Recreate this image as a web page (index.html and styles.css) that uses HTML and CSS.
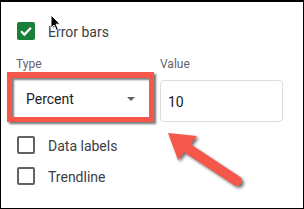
FILE: index.html
```html
<!DOCTYPE html>
<html>
<head>
<meta charset="utf-8">
<link rel="stylesheet" href="styles.css">
</head>
<body>
<div class="frame">
  <div class="row check-row first">
    <span class="box checked">
      <svg width="18" height="18" viewBox="0 0 18 18"><polyline points="4,9.2 7.4,12.6 14,5.8" fill="none" stroke="#fff" stroke-width="2.2"/></svg>
    </span>
    <span class="label">Error bars</span>
  </div>
  <div class="fields">
    <div class="col type-col">
      <div class="field-label type-label">Type</div>
      <div class="highlight">
        <div class="select">
          <span class="select-text">Percent</span>
          <span class="caret"></span>
        </div>
      </div>
    </div>
    <div class="col value-col">
      <div class="field-label">Value</div>
      <div class="input">10</div>
    </div>
  </div>
  <div class="row check-row second">
    <span class="box"></span>
    <span class="label">Data labels</span>
  </div>
  <div class="row check-row third">
    <span class="box"></span>
    <span class="label">Trendline</span>
  </div>

  <svg class="arrow" width="304" height="209" viewBox="0 0 304 209">
    <g class="arrow-g">
      <line x1="184" y1="146" x2="237" y2="181" stroke="#f5574a" stroke-width="10" stroke-linecap="round"/>
      <polygon points="168,133 197,136 178,160" fill="#f5574a"/>
    </g>
  </svg>

  <svg class="cursor" width="12" height="18" viewBox="0 0 12 18">
    <path d="M1,1 L1,14 L4,11 L6.5,16.5 L8.5,15.5 L6,10.2 L10.2,10.2 Z" fill="#000" stroke="#fff" stroke-width="1"/>
  </svg>
</div>
</body>
</html>
```

FILE: styles.css
```css
html, body {
  margin: 0;
  padding: 0;
  background: #fff;
}
.frame {
  position: relative;
  box-sizing: border-box;
  width: 304px;
  height: 209px;
  border: 1px solid #000;
  border-top-width: 2px;
  overflow: hidden;
  font-family: Roboto, "Noto Sans", sans-serif;
  color: #3c4043;
}
.row {
  display: flex;
  align-items: center;
}
.check-row {
  padding-left: 16px;
  height: 18px;
}
.first {
  margin-top: 20px;
}
.box {
  box-sizing: border-box;
  width: 18px;
  height: 18px;
  border: 2px solid #5f6368;
  border-radius: 2px;
  flex: none;
  display: block;
}
.box.checked {
  background: #188038;
  border-color: #188038;
  position: relative;
}
.box.checked svg {
  position: absolute;
  left: -2px;
  top: -2px;
}
.label {
  font-size: 14px;
  line-height: 18px;
  margin-left: 13px;
  margin-top: 2px;
}
.fields {
  display: flex;
  margin-top: 17px;
  padding-left: 6px;
  gap: 6px;
}
.col {
  display: flex;
  flex-direction: column;
}
.field-label {
  font-size: 12px;
  line-height: 14px;
  color: #5f6368;
}
.type-label {
  padding-left: 9px;
}
.highlight {
  box-sizing: border-box;
  width: 147px;
  height: 50px;
  margin-top: 1px;
  border: 5px solid #f5574a;
  border-top-width: 6px;
  box-shadow: 2px 2px 2px rgba(0,0,0,0.55), inset 2px 2px 2px rgba(0,0,0,0.5);
  display: flex;
}
.select {
  flex: 1;
  display: flex;
  align-items: center;
  justify-content: space-between;
  padding: 2px 14px 0 14px;
}
.select-text {
  font-size: 14px;
  color: #202124;
}
.caret {
  width: 0;
  height: 0;
  border-left: 4px solid transparent;
  border-right: 4px solid transparent;
  border-top: 4px solid #5f6368;
  margin-top: 1px;
}
.value-col .input {
  box-sizing: border-box;
  width: 123px;
  height: 42px;
  margin-top: 9px;
  border: 1px solid #dadce0;
  border-radius: 4px;
  font-size: 14px;
  color: #202124;
  display: flex;
  align-items: center;
  padding-left: 7px;
  padding-top: 1px;
}
.second {
  margin-top: 14px;
}
.third {
  margin-top: 13px;
}
.arrow {
  position: absolute;
  left: -1px;
  top: -2px;
}
.arrow-g {
  filter: drop-shadow(2px 2px 1.5px rgba(0,0,0,0.55));
}
.cursor {
  position: absolute;
  left: 49px;
  top: 12px;
}
```
